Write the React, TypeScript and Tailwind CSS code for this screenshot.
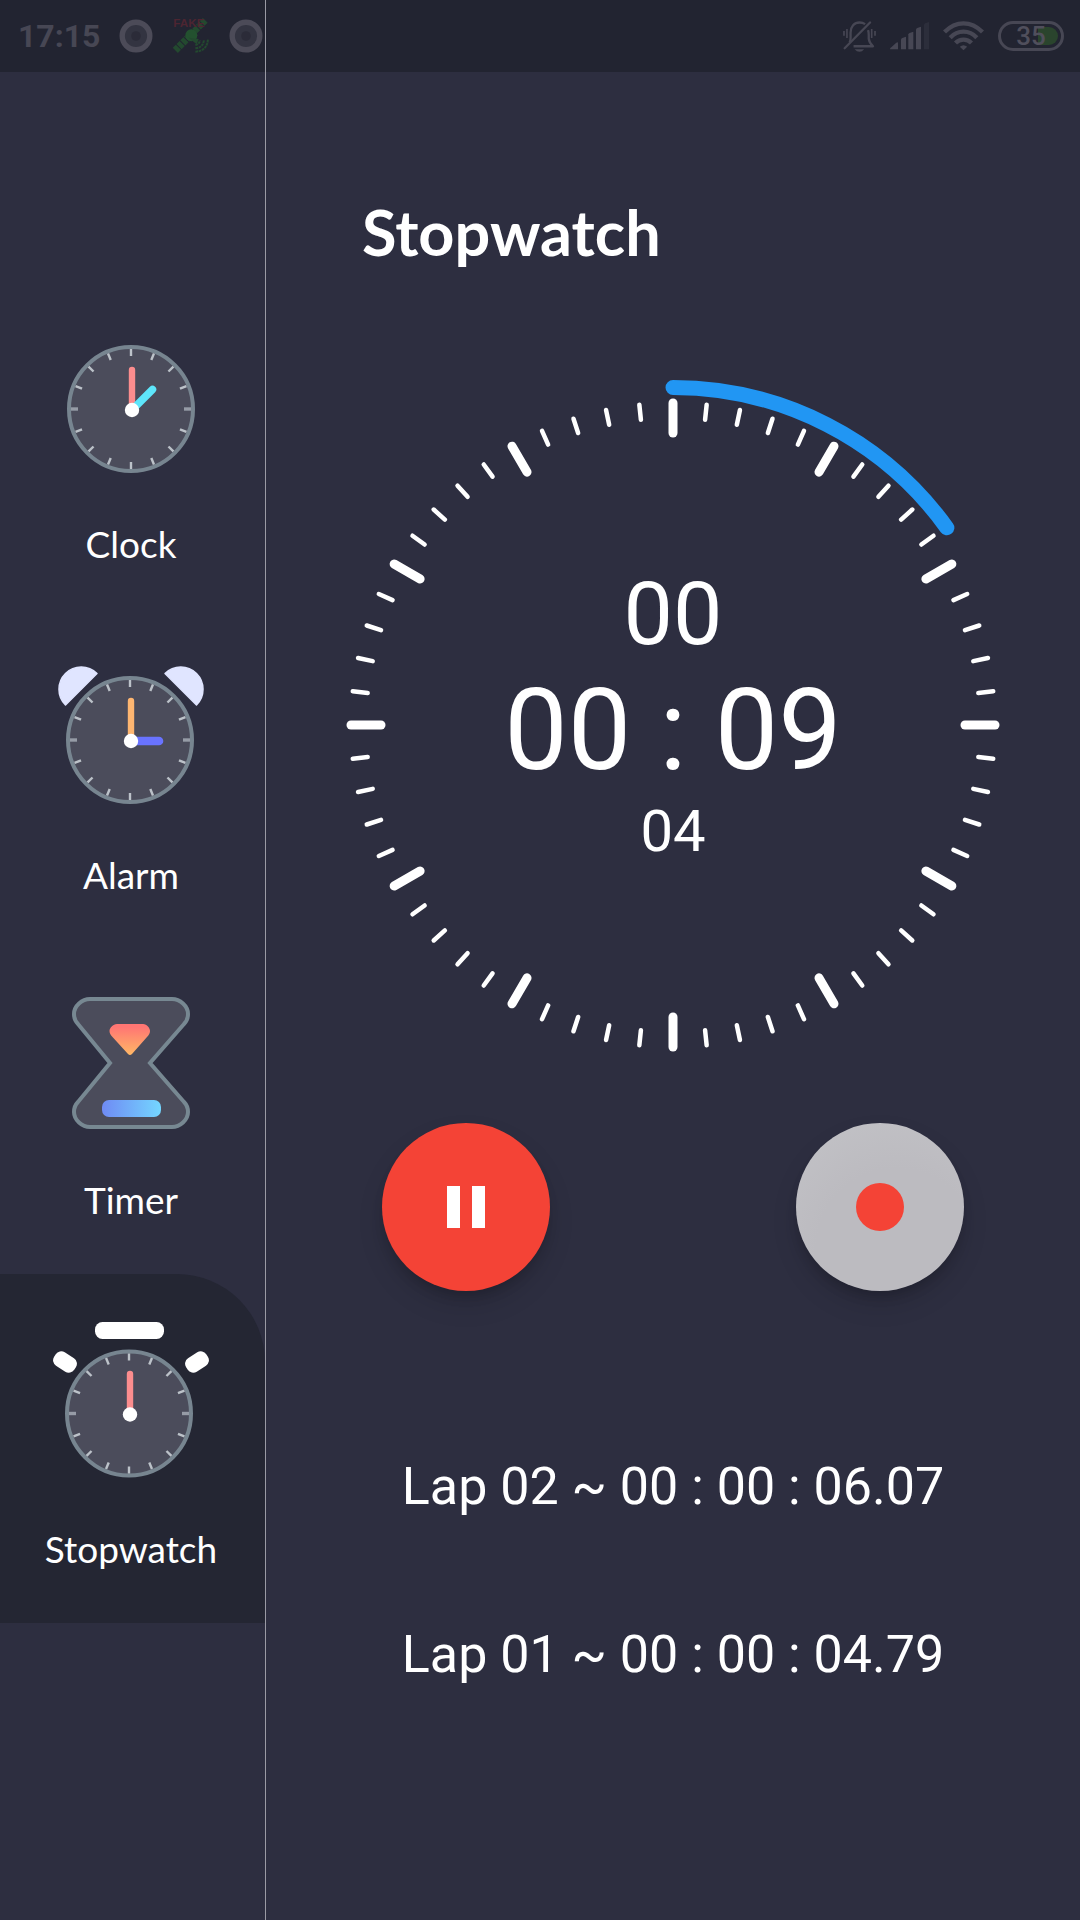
import React, { useState } from "react";

const TICK_ANGLES = Array.from({ length: 16 }, (_, i) => i * 22.5);

/** Small dial shared by the clock, alarm and stopwatch icons; radius 64. */
function Face({ cx, cy }: { cx: number; cy: number }) {
  return (
    <g>
      <circle cx={cx} cy={cy} r="62" fill="#4b4c5b" stroke="#778590" strokeWidth="4" />
      {TICK_ANGLES.map((a) => (
        <line
          key={a}
          x1={cx}
          x2={cx}
          y1={cy - 60}
          y2={cy - 53}
          stroke={a === 90 || a === 270 ? "#969ba6" : "#bcc2c9"}
          strokeWidth={a === 90 || a === 270 ? 3.4 : 2.4}
          transform={`rotate(${a} ${cx} ${cy})`}
        />
      ))}
    </g>
  );
}

function ClockIcon() {
  return (
    <svg width="128" height="128" viewBox="0 0 128 128" aria-hidden="true">
      <Face cx={64} cy={64} />
      <path d="M65 25V64" stroke="#fc8d8e" strokeWidth="6.4" strokeLinecap="round" />
      <path d="M65 65L85.5 44.5" stroke="#5ee6fb" strokeWidth="7.5" strokeLinecap="round" />
      <circle cx="65" cy="65" r="7.2" fill="#fff" />
    </svg>
  );
}

function AlarmIcon() {
  return (
    <svg width="146" height="138" viewBox="0 0 146 138" aria-hidden="true">
      <path
        d="M7.5 39A22 22 0 0 1 39 7.5Z M138.5 39A22 22 0 0 0 107 7.5Z"
        fill="#e0e5ff"
        stroke="#e0e5ff"
        strokeWidth="1.5"
        strokeLinejoin="round"
      />
      <Face cx={72} cy={74} />
      <path d="M73 35V74" stroke="#feb671" strokeWidth="6.4" strokeLinecap="round" />
      <path d="M73 75H101" stroke="#6973ff" strokeWidth="8.6" strokeLinecap="round" />
      <circle cx="73" cy="75" r="7.2" fill="#fff" />
    </svg>
  );
}

function TimerIcon() {
  return (
    <svg width="118" height="132" viewBox="0 0 118 132" aria-hidden="true">
      <defs>
        <linearGradient id="sand-top" x1="0" y1="0" x2="0" y2="1">
          <stop offset="0.1" stopColor="#ff7673" />
          <stop offset="1" stopColor="#ffb866" />
        </linearGradient>
        <linearGradient id="sand-bottom" x1="0" y1="0" x2="1" y2="0">
          <stop offset="0" stopColor="#6f8af4" />
          <stop offset="1" stopColor="#74d6ff" />
        </linearGradient>
      </defs>
      <path
        d="M18 2H100C108 2 116 9 116 17C116 21 115 24 112 27L78 66L112 105C115 108 116 111 116 115C116 123 108 130 100 130H18C10 130 2 123 2 115C2 111 3 108 6 105L38 66L6 27C3 24 2 21 2 17C2 9 10 2 18 2Z"
        fill="#4b4c5b"
        stroke="#778892"
        strokeWidth="4"
      />
      <path
        d="M45 27H71C75 27 78 31 78 34C78 36 77 38 75 40L60 57Q58 59 56 57L40.500 40C38.500 38 37.500 36 37.500 34C37.500 31 41 27 45 27Z"
        fill="url(#sand-top)"
      />
      <rect x="30" y="103" width="59" height="17" rx="7" fill="url(#sand-bottom)" />
    </svg>
  );
}

function StopwatchIcon() {
  return (
    <svg width="156" height="156" viewBox="0 0 156 156" aria-hidden="true">
      <rect x="42" y="0" width="69" height="17" rx="7.500" fill="#fff" />
      <rect x="0" y="32" width="24" height="16" rx="6.500" fill="#fff" transform="rotate(33 12 40)" />
      <rect x="132" y="32" width="24" height="16" rx="6.500" fill="#fff" transform="rotate(-33 144 40)" />
      <Face cx={76} cy={91.5} />
      <path d="M77 52V91" stroke="#fc8d8e" strokeWidth="6.4" strokeLinecap="round" />
      <circle cx="77" cy="92.500" r="7.2" fill="#fff" />
    </svg>
  );
}

const MENU = [
  { name: "Clock", Icon: ClockIcon },
  { name: "Alarm", Icon: AlarmIcon },
  { name: "Timer", Icon: TimerIcon },
  { name: "Stopwatch", Icon: StopwatchIcon },
];

function RingIcon() {
  return (
    <svg width="34" height="34" viewBox="0 0 34 34" aria-hidden="true">
      <circle cx="17" cy="17" r="13.800" fill="#333441" stroke="#4c4b58" strokeWidth="5.400" />
      <circle cx="17" cy="17" r="4.800" fill="#2b2b38" />
    </svg>
  );
}

function FakeGpsIcon() {
  return (
    <svg width="38" height="38" viewBox="0 0 114 114" aria-hidden="true">
      <g fill="none" stroke="#23492f">
        <path d="M10 100L46 64" strokeWidth="22" strokeDasharray="13 3" />
        <path d="M68 42L102 8" strokeWidth="20" strokeDasharray="13 3" />
        <path d="M70 84Q82 82 84 70M70 94Q94 92 96 68M70 104Q106 102 108 66" strokeWidth="6" strokeDasharray="8 2" />
      </g>
      <circle cx="58" cy="55" r="18" fill="#23512f" />
      <path d="M50 62L74 82L80 66Z" fill="#23492f" />
      <text x="4" y="29" fontFamily="Liberation Sans" fontWeight="700" fontSize="35" fill="#4d2531">
        FAKE
      </text>
    </svg>
  );
}

function StatusBar() {
  return (
    <header className="absolute inset-x-0 top-0 flex h-[72px] items-center justify-between bg-[#222431] pr-4 pl-[18px] text-[#474754]">
      <div className="flex items-center gap-[19px]">
        <time className="text-[32px] leading-9 font-bold">17:15</time>
        <RingIcon />
        <FakeGpsIcon />
        <RingIcon />
      </div>
      <div className="flex items-center gap-3.5">
        <svg width="33" height="32" viewBox="0 0 100 96" fill="none" stroke="currentColor" role="img" aria-label="Muted">
          <path
            d="M20 68Q23 62 23 54V38C23 20 34 7 50 7Q60 7 67 12M76 30Q78 36 78 44V56Q79 68 91 79H32"
            strokeWidth="7"
            strokeLinejoin="round"
          />
          <path d="M5 85L82 7" strokeWidth="7" strokeLinecap="round" />
          <path d="M3 33V47M12 27V54M87 27V54M97 33V47" strokeWidth="5" />
          <path d="M35 88H64Q58 96 50 96Q42 96 35 88Z" fill="currentColor" stroke="none" />
        </svg>
        <svg width="39" height="28" viewBox="0 0 117 84" fill="currentColor" role="img" aria-label="Signal">
          <path d="M0 82Q0 78 4 76L18 63Q24 58 24 64V82Z" />
          <path d="M33 82V52Q33 48 48 44V82Z" />
          <path d="M55 82V37Q55 33 70 29V82Z" />
          <path d="M78 82V22Q78 18 93 14V82Z" />
          <path d="M102 82V8Q102 4 117 0V82Z" opacity="0.3" />
        </svg>
        <svg width="41" height="30" viewBox="0 0 122 90" fill="none" stroke="currentColor" strokeWidth="13" role="img" aria-label="Wi-Fi">
          <path d="M4 33Q30 7 61 7T118 33" />
          <path d="M21 50Q38 32 61 32T101 50" />
          <path d="M37 66Q47 56 61 56T85 66" />
          <path d="M50 77Q61 68 72 77L61 88Z" fill="currentColor" stroke="none" />
        </svg>
        <div className="relative flex h-[30px] w-[66px] items-center justify-center rounded-full border-[3px] border-[#474754]">
          <span className="absolute top-[3px] right-[3px] h-[18px] w-5 rounded-r-full bg-[#2a442d]" />
          <span className="relative text-[26px] leading-6 font-medium text-[#504f5c]">35</span>
        </div>
      </div>
    </header>
  );
}

const DIAL_TICKS = Array.from({ length: 60 }, (_, i) => i);

function Dial({ seconds }: { seconds: number }) {
  const angle = (seconds / 60) * 2 * Math.PI;
  const x = 350 + 337.5 * Math.sin(angle);
  const y = 350 - 337.5 * Math.cos(angle);
  return (
    <svg viewBox="0 0 700 700" className="col-start-1 row-start-1 w-full" aria-hidden="true">
      {DIAL_TICKS.map((i) => (
        <line
          key={i}
          x1="350"
          x2="350"
          y1="28"
          y2={i % 5 === 0 ? 58 : 43}
          stroke="#fff"
          strokeWidth={i % 5 === 0 ? 9 : 4.5}
          strokeLinecap="round"
          transform={`rotate(${i * 6} 350 350)`}
        />
      ))}
      <path
        d={`M350 12.500A337.500 337.500 0 0 1 ${x} ${y}`}
        fill="none"
        stroke="#2196f3"
        strokeWidth="15"
        strokeLinecap="round"
      />
    </svg>
  );
}

const LAPS = ["Lap 02 ~ 00 : 00 : 06.07", "Lap 01 ~ 00 : 00 : 04.79"];

export default function App() {
  const [page, setPage] = useState("Stopwatch");
  return (
    <div className="relative flex min-h-screen bg-[#2d2e40] font-[Roboto,sans-serif] text-white">
      <StatusBar />
      <nav className="relative flex w-[266px] shrink-0 flex-col justify-center border-r border-[#9a9aa4]">
        {MENU.map(({ name, Icon }) => (
          <button
            key={name}
            type="button"
            aria-current={page === name ? "page" : undefined}
            onClick={() => setPage(name)}
            className={`flex flex-col items-center gap-[47px] rounded-tr-[88px] pt-12 pr-[3px] pb-[50px] font-[Lato,sans-serif] text-[37px] leading-12 ${
              page === name ? "bg-[#242633]" : "bg-transparent"
            }`}
          >
            <Icon />
            <span>{name}</span>
          </button>
        ))}
      </nav>
      <main className="flex min-w-0 grow flex-col pt-48">
        <h1 className="pl-24 font-[Lato,sans-serif] text-[63px] leading-20 font-bold">Stopwatch</h1>
        <div className="mx-auto mt-[103px] grid w-full max-w-[700px] place-items-center">
          <Dial seconds={9.04} />
          <div role="timer" className="col-start-1 row-start-1 flex flex-col items-center pb-6">
            <span className="text-[88px] leading-[103px]">00</span>
            <span className="text-[113px] leading-[132px]">00 : 09</span>
            <span className="text-[58px] leading-[68px]">04</span>
          </div>
        </div>
        <div className="mt-12 flex justify-between px-29">
          <button
            type="button"
            aria-label="Pause"
            className="flex size-[168px] items-center justify-center gap-3 rounded-full bg-[#f44336] shadow-[0_8px_12px_-3px_rgba(0,0,0,0.16),0_14px_26px_rgba(0,0,0,0.12)]"
          >
            <span className="h-[42px] w-[13px] bg-white" />
            <span className="h-[42px] w-[13px] bg-white" />
          </button>
          <button
            type="button"
            aria-label="Record lap"
            className="flex size-[168px] items-center justify-center rounded-full bg-[radial-gradient(circle_at_60%_75%,#bcbbc0_50%,#c3c3c7_100%)] shadow-[0_8px_12px_-3px_rgba(0,0,0,0.16),0_14px_26px_rgba(0,0,0,0.12)]"
          >
            <span className="size-12 rounded-full bg-[#f44336]" />
          </button>
        </div>
        <ol className="mt-[164px] flex flex-col items-center gap-[104px] text-[52px] leading-16">
          {LAPS.map((lap) => (
            <li key={lap}>{lap}</li>
          ))}
        </ol>
      </main>
    </div>
  );
}
